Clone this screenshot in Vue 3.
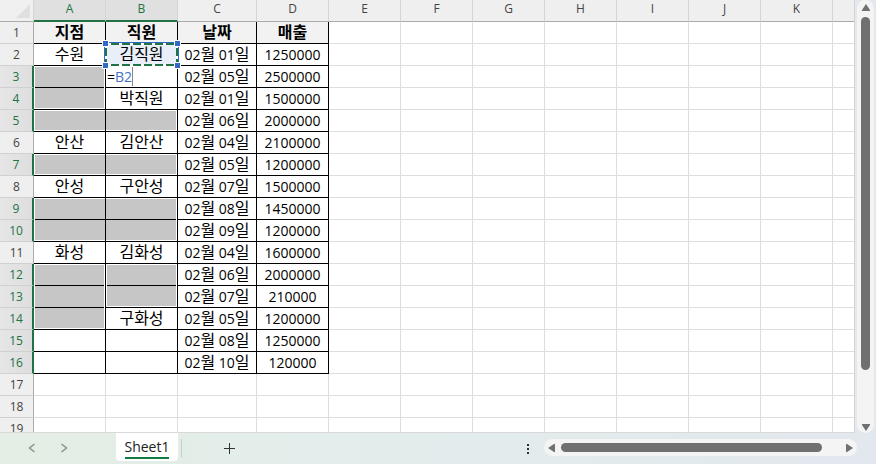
<template>
    <div class="workbook">
        <div class="main">
            <div class="grid">
                <table class="sheet">
                    <colgroup>
                        <col class="col-row" />
                        <col v-for="name in columns" :key="name" :class="columnClass(name)" />
                    </colgroup>
                    <thead>
                        <tr>
                            <th class="corner">
                                <svg width="14" height="14" viewBox="0 0 14 14"><path d="M14 0V14H0Z" fill="#dfdfdf" /></svg>
                            </th>
                            <th v-for="name in columns" :key="name" class="col-head"
                                :class="{ active: name === 'A' || name === 'B' }">{{ name === 'L' ? '' : name }}</th>
                        </tr>
                    </thead>
                    <tbody>
                        <tr v-for="row in 19" :key="row">
                            <th class="row-head" :class="{ active: activeRows.includes(row) }">{{ row }}</th>
                            <td v-for="name in columns" :key="name" :class="cellClass(name, row)">
                                <template v-if="name === 'C' && row > 1 && records[row]">
                                    02<span class="hangul">월 </span>{{ records[row].C }}<span class="hangul">일</span>
                                </template>
                                <template v-else-if="name === 'B' && row === 3">=<span class="ref">B2</span></template>
                                <template v-else>{{ records[row]?.[name] }}</template>
                                <svg v-if="name === 'B' && row === 2" class="marquee" width="79" height="29"
                                    viewBox="0 0 79 29">
                                    <path d="M4 4H75V25H4Z" fill="none" stroke="#fff" stroke-width="2" />
                                    <rect x="3" y="2" width="73" height="1" fill="#2f69c9" />
                                    <rect x="2" y="3" width="1" height="22" fill="#2f69c9" />
                                    <rect x="76" y="3" width="1" height="22" fill="#2f69c9" />
                                    <path d="M9 4H75M9 25H75M4 8V24M75 8V24" stroke="#217346" stroke-width="2"
                                        stroke-dasharray="8 3" />
                                    <g v-for="[x, y] in handles" :key="x + '-' + y">
                                        <rect :x="x - 1" :y="y - 1" width="7" height="7" fill="#fff" />
                                        <rect :x="x" :y="y" width="5" height="5" fill="#2f69c9" />
                                    </g>
                                </svg>
                            </td>
                        </tr>
                    </tbody>
                </table>
            </div>
            <div class="v-scroll">
                <button class="arrow" aria-label="Scroll up">
                    <svg width="10" height="8" viewBox="0 0 10 8"><path d="M5 0L9 6Q9.500 7 8.500 7H1.500Q.5 7 1 6Z" fill="#707070" /></svg>
                </button>
                <div class="v-thumb"></div>
                <button class="arrow" aria-label="Scroll down">
                    <svg width="10" height="8" viewBox="0 0 10 8"><path d="M5 8L9 2Q9.500 1 8.500 1H1.500Q.5 1 1 2Z" fill="#707070" /></svg>
                </button>
            </div>
        </div>

        <!-- Sheet tabs -->
        <div class="footer">
            <button class="nav" aria-label="Previous sheet">
                <svg width="8" height="10" viewBox="0 0 8 10"><path d="M6.500 1L1.500 5L6.500 9" /></svg>
            </button>
            <button class="nav" aria-label="Next sheet">
                <svg width="8" height="10" viewBox="0 0 8 10"><path d="M1.500 1L6.500 5L1.500 9" /></svg>
            </button>
            <button class="tab"><span>Sheet1</span></button>
            <i class="divider"></i>
            <button class="add" aria-label="New sheet">
                <svg width="11" height="11" viewBox="0 0 11 11"><path d="M5.500 0V11M0 5.500H11" stroke="#333" /></svg>
            </button>
            <div class="dots"><i></i><i></i><i></i></div>
            <div class="h-scroll">
                <button class="arrow" aria-label="Scroll left">
                    <svg width="8" height="10" viewBox="0 0 8 10"><path d="M0 5L6 1Q7 .5 7 1.500V8.500Q7 9.500 6 9Z" fill="#707070" /></svg>
                </button>
                <div class="h-thumb"></div>
                <button class="arrow" aria-label="Scroll right">
                    <svg width="8" height="10" viewBox="0 0 8 10"><path d="M8 5L2 1Q1 .5 1 1.500V8.500Q1 9.500 2 9Z" fill="#707070" /></svg>
                </button>
            </div>
        </div>
    </div>
</template>

<script setup>
const columns = ['A', 'B', 'C', 'D', 'E', 'F', 'G', 'H', 'I', 'J', 'K', 'L']
const activeRows = [3, 4, 5, 7, 9, 10, 12, 13, 14, 15, 16]
const handles = [[1, 1], [73, 1], [1, 23], [73, 23]]

const records = {
    1: { A: '지점', B: '직원', C: '날짜', D: '매출' },
    2: { A: '수원', B: '김직원', C: '01', D: '1250000' },
    3: { C: '05', D: '2500000' },
    4: { B: '박직원', C: '01', D: '1500000' },
    5: { C: '06', D: '2000000' },
    6: { A: '안산', B: '김안산', C: '04', D: '2100000' },
    7: { C: '05', D: '1200000' },
    8: { A: '안성', B: '구안성', C: '07', D: '1500000' },
    9: { C: '08', D: '1450000' },
    10: { C: '09', D: '1200000' },
    11: { A: '화성', B: '김화성', C: '04', D: '1600000' },
    12: { C: '06', D: '2000000' },
    13: { C: '07', D: '210000' },
    14: { B: '구화성', C: '05', D: '1200000' },
    15: { C: '08', D: '1250000' },
    16: { C: '10', D: '120000' },
}

// selected ranges: columns, first row, last row
const ranges = [
    ['A', 3, 4],
    ['AB', 5, 5],
    ['AB', 7, 7],
    ['AB', 9, 10],
    ['A', 12, 14],
    ['B', 12, 13],
]

function columnClass(name) {
    if (name === 'C') return 'col-wide'
    return name === 'L' ? 'col-rest' : 'col'
}

function cellClass(name, row) {
    const range = ranges.find(([cols, from, to]) => cols.includes(name) && row >= from && row <= to)
    return {
        lined: row <= 16 && 'ABCD'.includes(name),
        title: row === 1 && 'ABCD'.includes(name),
        ko: 'AB'.includes(name) || row === 1,
        copied: name === 'B' && row === 2,
        editing: name === 'B' && row === 3,
        selected: range,
        'gap-top': range && row === range[1],
        'gap-bottom': range && row === range[2],
        'gap-left': range && name === range[0][0],
        'gap-right': range && name === range[0].slice(-1),
    }
}
</script>

<style>
html,
body,
#app {
    height: 100%;
}

body {
    margin: 0;
}
</style>

<style scoped>
.workbook {
    height: 100%;
    display: flex;
    flex-direction: column;
    overflow: hidden;
    background: linear-gradient(90deg, #e4eee4, #e3edeb 35%, #e2e8ee);
    font-family: "Open Sans", "Noto Sans CJK KR", sans-serif;
}

button {
    border: 0;
    padding: 0;
    background: none;
    font: inherit;
}

svg {
    display: block;
}

.main {
    flex: 1;
    min-height: 0;
    display: flex;
}

.grid {
    flex: 1;
    min-width: 0;
    overflow: hidden;
    background: #fff;
    border-right: 1px solid #d4d4d4;
    border-bottom: 1px solid #d9d9d9;
}

/* Table */
.sheet {
    width: 100%;
    table-layout: fixed;
    border-collapse: separate;
    border-spacing: 0;
}

.col-row {
    width: 34px;
}

.col {
    width: 72px;
}

.col-wide {
    width: 79px;
}

th,
td {
    box-sizing: border-box;
    height: 22px;
    padding: 0;
    line-height: 20px;
    text-align: center;
    white-space: nowrap;
}

td {
    position: relative;
    border-right: 1px solid #dedede;
    border-bottom: 1px solid #dedede;
    font-size: 14px;
    color: #000;
}

td:last-child,
.col-head:last-child {
    border-right: 0;
}

.ko {
    padding-bottom: 3px;
    font-family: "Noto Sans CJK KR", sans-serif;
    font-size: 16px;
    line-height: 18px;
}

.hangul {
    font-family: "Noto Sans CJK KR", sans-serif;
    font-size: 16px;
    line-height: 0;
}

.corner {
    background: #f0f0f0;
    border-right: 1px solid #d4d4d4;
    border-bottom: 1px solid #ababab;
}

.corner svg {
    margin-left: 16px;
}

.col-head {
    background: #efefef;
    border-right: 1px solid #d4d4d4;
    border-bottom: 1px solid #ababab;
    font-size: 12px;
    font-weight: 400;
    line-height: 17px;
    vertical-align: top;
    color: #444;
}

.col-head.active {
    background: #e0e0e0;
    border-bottom: 2px solid #217346;
    color: #217346;
}

.row-head {
    padding-top: 1px;
    background: #efefef;
    border-right: 1px solid #ababab;
    border-bottom: 1px solid #d0d0d0;
    font-size: 12px;
    font-weight: 400;
    color: #444;
}

.row-head.active {
    background: linear-gradient(90deg, #e6e6e6, #dedede);
    border-right: 2px solid #217346;
    color: #217346;
}

td.lined {
    border-color: #000;
}

td.title {
    background: #f2f2f2;
    font-weight: 700;
}

/* Selected cells keep a white gap inside the range edge */
td.selected {
    background: #c6c6c6;
}

td.selected::before {
    content: "";
    position: absolute;
    inset: 0 0 -1px 0;
    border: 0 solid #fff;
}

td.gap-top::before {
    border-top-width: 1px;
}

td.gap-bottom::before {
    bottom: 0;
    border-bottom-width: 1px;
}

td.gap-left::before {
    border-left-width: 1px;
}

td.gap-right::before {
    border-right-width: 1px;
}

td.copied {
    background: #e9eff9;
}

.marquee {
    position: absolute;
    top: -4px;
    left: -4px;
    z-index: 2;
}

td.editing {
    padding: 0 0 0 1px;
    font-family: "Open Sans", sans-serif;
    font-size: 14px;
    text-align: left;
}

.ref {
    border-right: 1px solid #888;
    color: #4472c4;
}

/* Scroll bars */
.arrow {
    display: flex;
    align-items: center;
    justify-content: center;
}

.v-scroll {
    box-sizing: border-box;
    width: 17px;
    margin: 0 2px;
    padding: 4px 4px 2px;
    display: flex;
    flex-direction: column;
    align-items: center;
    gap: 5px;
    background: #f4f4f4;
    border-radius: 9px;
}

.v-thumb {
    flex: 1;
    width: 9px;
    margin-bottom: 48px;
    border-radius: 5px;
    background: #707070;
}

.footer {
    height: 31px;
    display: flex;
    align-items: flex-start;
}

.nav {
    width: 32px;
    height: 30px;
    display: flex;
    align-items: center;
    justify-content: center;
}

.nav:first-child {
    margin-left: 16px;
}

.nav path {
    fill: none;
    stroke: #8a908c;
    stroke-width: 1.500;
}

.tab {
    width: 62px;
    height: 28px;
    margin-left: 36px;
    background: #fff;
    border-radius: 0 0 4px 4px;
    font-size: 14px;
    color: #222;
}

.tab span {
    display: inline-block;
    line-height: 21px;
    border-bottom: 2px solid #107c41;
}

.divider {
    width: 1px;
    height: 18px;
    margin: 6px 0 0 3px;
    background: #c8cfca;
}

.add {
    width: 31px;
    height: 30px;
    margin-left: 32px;
    display: flex;
    align-items: center;
    justify-content: center;
}

.dots {
    margin: 11px 15px 0 auto;
    display: flex;
    flex-direction: column;
    gap: 2px;
}

.dots i {
    width: 2px;
    height: 2px;
    background: #333;
}

.h-scroll {
    box-sizing: border-box;
    width: calc(36% - 2px);
    height: 17px;
    margin: 6px 19px 0 0;
    padding: 0 4px;
    display: flex;
    align-items: center;
    gap: 5px;
    background: #f4f4f4;
    border-radius: 9px;
}

.h-thumb {
    flex: 1;
    height: 9px;
    margin-right: 18px;
    border-radius: 5px;
    background: #707070;
}
</style>
